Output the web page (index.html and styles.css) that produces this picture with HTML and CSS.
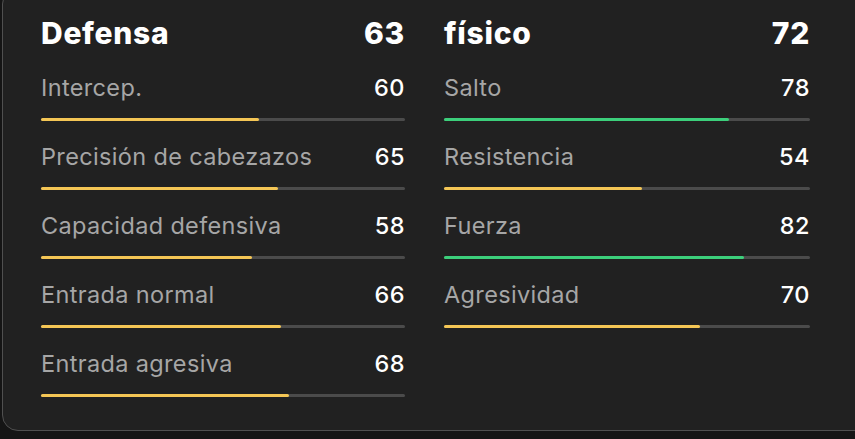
FILE: index.html
```html
<!DOCTYPE html>
<html lang="es">
<head>
<meta charset="utf-8">
<title>Atributos</title>
<link rel="stylesheet" href="styles.css">
</head>
<body>
<div class="card">
  <div class="cols">
    <section class="group">
      <div class="head"><span>Defensa</span><span>63</span></div>
      <div class="stat"><div class="row"><span class="label">Intercep.</span><span class="val">60</span></div><div class="track"><div class="fill yellow" style="width:60%"></div></div></div>
      <div class="stat"><div class="row"><span class="label">Precisión de cabezazos</span><span class="val">65</span></div><div class="track"><div class="fill yellow" style="width:65%"></div></div></div>
      <div class="stat"><div class="row"><span class="label">Capacidad defensiva</span><span class="val">58</span></div><div class="track"><div class="fill yellow" style="width:58%"></div></div></div>
      <div class="stat"><div class="row"><span class="label">Entrada normal</span><span class="val">66</span></div><div class="track"><div class="fill yellow" style="width:66%"></div></div></div>
      <div class="stat"><div class="row"><span class="label">Entrada agresiva</span><span class="val">68</span></div><div class="track"><div class="fill yellow" style="width:68%"></div></div></div>
    </section>
    <section class="group">
      <div class="head"><span>físico</span><span>72</span></div>
      <div class="stat"><div class="row"><span class="label">Salto</span><span class="val">78</span></div><div class="track"><div class="fill green" style="width:78%"></div></div></div>
      <div class="stat"><div class="row"><span class="label">Resistencia</span><span class="val">54</span></div><div class="track"><div class="fill yellow" style="width:54%"></div></div></div>
      <div class="stat"><div class="row"><span class="label">Fuerza</span><span class="val">82</span></div><div class="track"><div class="fill green" style="width:82%"></div></div></div>
      <div class="stat"><div class="row"><span class="label">Agresividad</span><span class="val">70</span></div><div class="track"><div class="fill yellow" style="width:70%"></div></div></div>
    </section>
  </div>
</div>
</body>
</html>
```
FILE: styles.css
```css
html, body {
  margin: 0;
  padding: 0;
  background: #151515;
  overflow: hidden;
  height: 100%;
}
body {
  font-family: Inter, "Noto Sans", sans-serif;
  color: #fff;
}
.card {
  margin: -12px -30px 0 2px;
  border: 1px solid #505050;
  border-radius: 16px;
  background: #212121;
  padding: 26px 0 33px 38px;
}
.cols {
  display: grid;
  grid-template-columns: 364px 366px;
  column-gap: 39px;
  align-items: start;
}
.head {
  display: flex;
  justify-content: space-between;
  font-size: 30px;
  font-weight: 800;
  line-height: 36px;
  margin-bottom: 23px;
  letter-spacing: 0.7px;
}
.stat {
  margin-bottom: 22px;
}
.stat:last-child {
  margin-bottom: 0;
}
.row {
  display: flex;
  justify-content: space-between;
  line-height: 28px;
  font-size: 23.5px;
}
.label {
  color: #a6a6a6;
  letter-spacing: 0.35px;
}
.val {
  color: #fff;
  font-weight: 500;
  letter-spacing: 0.5px;
}
.track {
  margin-top: 16px;
  height: 3px;
  background: #4b4b4b;
  border-radius: 2px;
}
.fill {
  height: 100%;
  border-radius: 2px;
}
.yellow { background: #f4c655; }
.green { background: #3ccf7b; }
```
